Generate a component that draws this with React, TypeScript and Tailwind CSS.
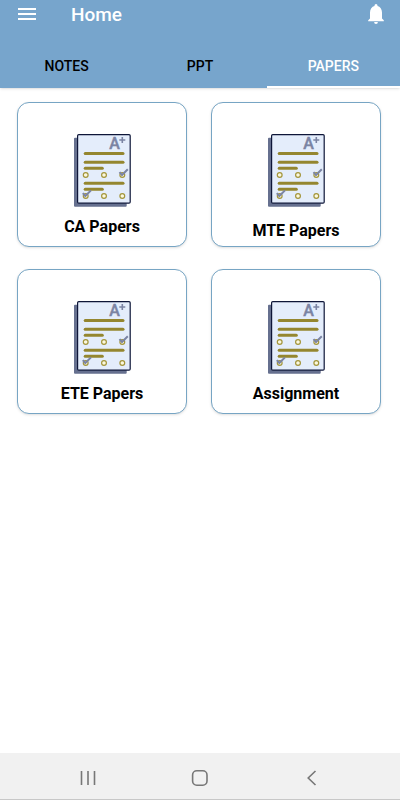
import { useState } from "react";
import { MdMenu } from "react-icons/md";

const tabs = ["NOTES", "PPT", "PAPERS"];

const cards = [
  { title: "CA Papers", space: "gap-[10px]" },
  { title: "MTE Papers", space: "gap-[14px]" },
  { title: "ETE Papers", space: "gap-[10px]" },
  { title: "Assignment", space: "gap-[10px]" },
];

function BellIcon() {
  return (
    <svg width="24" height="24" viewBox="0 0 24 24" fill="currentColor" aria-hidden="true">
      <path d="M19.8 18.2v1h-15.6v-1l1.8-1.8v-5.8c0-3.2 1.8-5.8 4.5-6.5v-0.5a1.5 1.5 0 0 1 3 0v0.5c2.7 0.7 4.5 3.3 4.5 6.5v5.8z" />
      <path d="M10.1 20.1h3.8a1.9 1.9 0 0 1-3.8 0z" />
    </svg>
  );
}

function PaperIcon() {
  return (
    <svg width="58" height="74" viewBox="0 0 58 74" fill="none" aria-hidden="true">
      {/* back sheet */}
      <rect x="1" y="4.7" width="52.7" height="69" rx="1" fill="#66708f" />
      {/* front sheet */}
      <rect x="4.6" y="1.6" width="52.6" height="68.6" rx="1.2" fill="#e4edfb" stroke="#0e1638" strokeWidth="1.2" />
      <text x="36.2" y="16" fontSize="16" fontWeight="500" fill="#7b84a3" stroke="#7b84a3" strokeWidth="0.4">A</text>
      <path d="M46.3 7h6M49.3 4v6" stroke="#7b84a3" strokeWidth="1.6" />

      {/* answer lines */}
      <g stroke="#94862f" strokeWidth="3" strokeLinecap="round">
        <path d="M12.2 20.6H50" />
        <path d="M12.2 29.3H50" />
        <path d="M12.2 35.3H29.3" />
        <path d="M12.2 50.3H50" />
        <path d="M12.2 56.3H29.3" />
      </g>

      {/* options */}
      <g stroke="#a3953a" strokeWidth="1.2" fill="#fbf8df">
        <circle cx="12.7" cy="42" r="2.4" />
        <circle cx="31" cy="42" r="2.4" />
        <circle cx="49.3" cy="42" r="2.4" />
        <circle cx="12.7" cy="63" r="2.4" />
        <circle cx="31" cy="63" r="2.4" />
        <circle cx="49.3" cy="63" r="2.4" />
      </g>
      <g stroke="#7b84a3" strokeWidth="2">
        <path d="M46.5 39.2L49 42L54.8 36.2" />
        <path d="M9.8 60.2L12.3 63L18 57.4" />
      </g>
    </svg>
  );
}

export default function App() {
  const [active, setActive] = useState("PAPERS");

  return (
    <div className="min-h-screen flex flex-col bg-white font-['Roboto',sans-serif]">

      {/* HEADER */}
      <header className="bg-[#77a5cc] shadow-sm">
        <div className="h-11 pt-0.5 px-3 flex items-start text-white">
          <button aria-label="Menu" className="ml-[3px]">
            <MdMenu size={24} />
          </button>
          <h1 className="ml-8 text-[19px] leading-[26px] font-medium">Home</h1>
          <button aria-label="Notifications" className="ml-auto">
            <BellIcon />
          </button>
        </div>

        {/* TABS */}
        <nav className="grid grid-cols-3">
          {tabs.map((tab) => (
            <button
              key={tab}
              onClick={() => setActive(tab)}
              className={`h-11 pt-0.5 text-sm font-medium border-b-2 ${
                active === tab ? "text-white border-white" : "text-black border-transparent"
              }`}
            >
              {tab}
            </button>
          ))}
        </nav>
      </header>

      {/* CARDS */}
      <main className="flex-1 grid grid-cols-2 content-start gap-x-6 gap-y-[22px] pt-[14px] pl-[17px] pr-[19px]">
        {cards.map((card) => (
          <button
            key={card.title}
            className={`h-[145px] pt-[30px] flex flex-col items-center ${card.space} bg-white border border-[#77a5c4] rounded-xl shadow-sm`}
          >
            <PaperIcon />
            <span className="text-base leading-5 font-bold text-black">{card.title}</span>
          </button>
        ))}
      </main>

      {/* SYSTEM BAR */}
      <footer className="h-[47px] pt-1 flex items-center justify-between px-[76px] bg-[#f1f1f1] border-b border-[#c8c8c8]">
        <button aria-label="Recent apps">
          <svg width="24" height="24" viewBox="0 0 24 24" stroke="#777777" strokeWidth="1.6">
            <path d="M5.5 5v14M12 5v14M18.5 5v14" />
          </svg>
        </button>
        <button aria-label="Home screen">
          <svg width="24" height="24" viewBox="0 0 24 24" fill="none" stroke="#777777" strokeWidth="1.6">
            <rect x="4.6" y="4.8" width="14.4" height="14.4" rx="4.2" />
          </svg>
        </button>
        <button aria-label="Back">
          <svg width="24" height="24" viewBox="0 0 24 24" fill="none" stroke="#777777" strokeWidth="1.6">
            <path d="M15.5 5L8.2 12L15.5 19" />
          </svg>
        </button>
      </footer>
    </div>
  );
}
